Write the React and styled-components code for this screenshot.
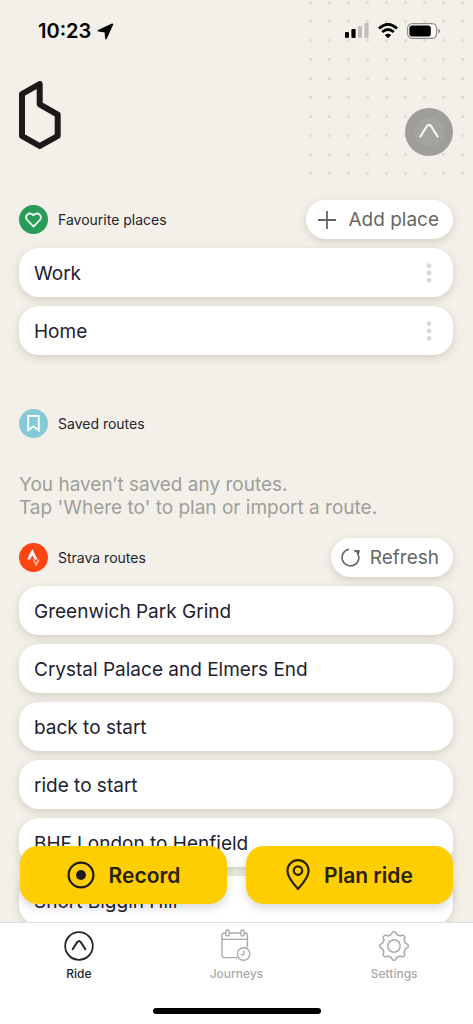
import { useState } from "react";
import styled, { createGlobalStyle, css } from "styled-components";

const places = ["Work", "Home"];
const stravaRoutes = [
    "Greenwich Park Grind",
    "Crystal Palace and Elmers End",
    "back to start",
    "ride to start",
    "BHF London to Henfield",
    "Short Biggin Hill",
];

// outline of the eight-toothed settings cog
function cogPath() {
    const at = (r, deg) => {
        const a = (deg * Math.PI) / 180;
        return `${(15 + r * Math.sin(a)).toFixed(2)} ${(15 - r * Math.cos(a)).toFixed(2)}`;
    };
    let d = `M${at(14, -6)}`;
    for (let t = 0; t < 360; t += 45) {
        d += `Q${at(14.6, t)} ${at(14, t + 6)}`;
        d += `L${at(12.6, t + 11)}`;
        d += `Q${at(11, t + 15)} ${at(11.8, t + 22.5)}`;
        d += `Q${at(11, t + 30)} ${at(12.6, t + 34)}`;
        d += `L${at(14, t + 39)}`;
    }
    return d + "Z";
}

function StatusBar() {
    return (
        <Status>
            <Clock>
                10:23
                <svg width="17" height="17" viewBox="0 0 17 17">
                    <path d="M1.4 7.8 15.4 1.3 9 15.4 8.3 8.8Z" stroke="#000" strokeWidth="1.6" strokeLinejoin="round" />
                </svg>
            </Clock>
            <Indicators>
                <svg width="24" height="16" viewBox="0 0 24 16">
                    <rect x="0" y="9" width="4" height="6" rx="1.3" />
                    <rect x="6.4" y="6" width="4.2" height="9" rx="1.3" />
                    <rect x="13" y="3" width="4" height="12" rx="1.3" fill="#bfbdb9" />
                    <rect x="19.4" y="0" width="4.2" height="15" rx="1.3" fill="#bfbdb9" />
                </svg>
                <svg width="20" height="16" viewBox="0 0 20 16">
                    <path d="M1 5.4Q10-2.6 19 5.4M4.2 9Q10 4 15.8 9" fill="none" stroke="#000" strokeWidth="2.7" />
                    <path d="M6.8 12Q10 9.4 13.2 12L10 15.2Z" />
                </svg>
                <svg width="34" height="16" viewBox="0 0 34 16">
                    <rect x=".6" y=".6" width="29" height="14.8" rx="4.6" fill="#fbfaf7" stroke="#8f8d89" strokeWidth="1.2" />
                    <rect x="2.4" y="2.4" width="21.4" height="11.2" rx="2.8" />
                    <path d="M31.2 5.8Q33.2 6.6 33.2 8T31.2 10.4Z" fill="#8f8d89" />
                </svg>
            </Indicators>
        </Status>
    );
}

function Logo() {
    return (
        <svg width="42" height="68" viewBox="0 0 42 68" role="img" aria-label="Beeline">
            <path d="M3 13 20.7 3V23.3L38.7 33.7V55L20.7 65 3 55Z" fill="none" stroke="#1b1919" strokeWidth="6" strokeLinejoin="round" />
        </svg>
    );
}

export default function App() {
    const [tab, setTab] = useState("Ride");

    return (
        <Screen>
            <GlobalStyle />
            <Content>
                <StatusBar />
                <Header>
                    <Logo />
                    <DeviceButton type="button" aria-label="Device">
                        <svg width="32" height="32" viewBox="0 0 32 32" fill="none">
                            <circle cx="16" cy="16" r="15" fill="#a4a3a0" />
                            <path d="M7.5 20.5 13.7 10.4Q16 7.2 18.3 10.4L24.5 20.5" stroke="#f6f5f2" strokeWidth="2.2" strokeLinecap="round" />
                        </svg>
                    </DeviceButton>
                </Header>

                <Section>
                    <SectionHead>
                        <Badge $color="#279b57">
                            <svg width="17" height="16" viewBox="0 0 17 16" fill="none">
                                <path d="M8.5 14.6 2.2 8C-.8 4.2 3.6-1 8.5 3.2 13.4-1 17.8 4.2 14.8 8Z" stroke="#eefaf2" strokeWidth="1.8" strokeLinejoin="round" />
                            </svg>
                        </Badge>
                        <SectionTitle>Favourite places</SectionTitle>
                        <PillButton type="button" $wide>
                            <svg width="18" height="18" viewBox="0 0 18 18">
                                <path d="M9 0V18M0 9H18" stroke="#666" strokeWidth="1.8" />
                            </svg>
                            Add place
                        </PillButton>
                    </SectionHead>
                    <List>
                        {places.map((place) => (
                            <Card key={place}>
                                <CardButton type="button">{place}</CardButton>
                                <MoreButton type="button" aria-label={`Options for ${place}`}>
                                    <svg width="6" height="20" viewBox="0 0 6 20" fill="#d9d9d9">
                                        <circle cx="3" cy="2.7" r="2.4" />
                                        <circle cx="3" cy="10" r="2.4" />
                                        <circle cx="3" cy="17.3" r="2.4" />
                                    </svg>
                                </MoreButton>
                            </Card>
                        ))}
                    </List>
                </Section>

                <Section>
                    <SectionHead>
                        <Badge $color="#84cbd7">
                            <svg width="13" height="17" viewBox="0 0 13 17" fill="none">
                                <path d="M1.2 1H11.8V15.4L6.5 11.4 1.2 15.4Z" stroke="#fff" strokeWidth="1.8" />
                            </svg>
                        </Badge>
                        <SectionTitle>Saved routes</SectionTitle>
                    </SectionHead>
                    <Empty>
                        You haven’t saved any routes.
                        <br />
                        Tap 'Where to' to plan or import a route.
                    </Empty>
                </Section>

                <Section>
                    <SectionHead>
                        <Badge $color="#fc4513">
                            <svg width="14" height="18" viewBox="0 0 14 18">
                                <path d="M0 10.4 5.3 0 10.6 10.4H7.5L5.3 6.2 3.1 10.4Z" fill="#fff" />
                                <path d="M5.4 10.4H7.5L9.1 13.4 10.6 10.4H13L9.1 17.8Z" fill="#fda68c" />
                            </svg>
                        </Badge>
                        <SectionTitle>Strava routes</SectionTitle>
                        <PillButton type="button">
                            <svg width="20" height="19" viewBox="0 0 20 19" fill="none" stroke="#666" strokeWidth="1.6">
                                <path d="M8 1.2A8.4 8.4 0 1 0 16 4.2" />
                                <path d="M13 2.6H18.4L17.2 7.6L16 4.2Z" fill="#666" strokeWidth="1" />
                            </svg>
                            Refresh
                        </PillButton>
                    </SectionHead>
                    <List>
                        {stravaRoutes.map((route) => (
                            <Card key={route}>
                                <CardButton type="button">{route}</CardButton>
                            </Card>
                        ))}
                    </List>
                </Section>
            </Content>

            <Footer>
                <Actions>
                    <ActionButton type="button">
                        <svg width="28" height="28" viewBox="0 0 28 28">
                            <circle cx="14" cy="14" r="12.4" fill="none" stroke="#1f1b12" strokeWidth="2.2" />
                            <circle cx="14" cy="14" r="5" fill="#1f1b22" />
                        </svg>
                        Record
                    </ActionButton>
                    <ActionButton type="button">
                        <svg width="24" height="32" viewBox="0 0 24 32" fill="none" stroke="#2a2305" strokeWidth="2.2">
                            <path d="M12 30Q1.4 18.4 1.4 11.8A10.6 10.6 0 0 1 22.6 11.8Q22.6 18.4 12 30Z" strokeLinejoin="round" />
                            <circle cx="12" cy="11.6" r="4.2" />
                        </svg>
                        Plan ride
                    </ActionButton>
                </Actions>
                <Tabs>
                    <Tab type="button" $active={tab === "Ride"} onClick={() => setTab("Ride")}>
                        <svg width="30" height="30" viewBox="0 0 30 30" strokeWidth="1.8">
                            <circle cx="15" cy="15" r="13.8" />
                            <path d="M8.6 18.2 13.2 11.2Q15 8.8 16.8 11.2L21.4 18.2" strokeWidth="2" strokeLinecap="round" />
                        </svg>
                        Ride
                    </Tab>
                    <Tab type="button" $active={tab === "Journeys"} onClick={() => setTab("Journeys")}>
                        <svg width="30" height="32" viewBox="0 0 30 32" strokeWidth="1.4">
                            <path d="M4.8 4H3.6Q1 4 1 6.6V26Q1 28.6 3.6 28.6H16.4M8.2 4H19.8M23.2 4H23.8Q26.4 4 26.4 6.6V18.6M1 10.4H26.4" />
                            <rect x="4.9" y="1" width="3.2" height="6" rx="1.4" />
                            <rect x="19.9" y="1" width="3.2" height="6" rx="1.4" />
                            <circle cx="22.6" cy="25" r="6.2" />
                            <path d="M22.8 21.6V25.6H19.8" />
                        </svg>
                        Journeys
                    </Tab>
                    <Tab type="button" $active={tab === "Settings"} onClick={() => setTab("Settings")}>
                        <svg width="30" height="30" viewBox="0 0 30 30" strokeWidth="1.5">
                            <path d={cogPath()} strokeLinejoin="round" />
                            <circle cx="15" cy="15" r="6.2" />
                        </svg>
                        Settings
                    </Tab>
                </Tabs>
                <HomeIndicator />
            </Footer>
        </Screen>
    );
}

const GlobalStyle = createGlobalStyle`
    *{
        box-sizing: border-box;
    }
    body{
        margin: 0;
        background: #f3f0e9;
        font-family: Inter, "Liberation Sans", sans-serif;
    }
    button{
        font-family: inherit;
        border: 0;
        padding: 0;
        background: none;
        cursor: pointer;
    }
    svg{
        display: block;
        flex-shrink: 0;
    }
`
const shadow = css`
    box-shadow: 0 3px 8px rgba(60, 60, 40, 0.18);
`
const Screen = styled.div`
    display: flex;
    flex-direction: column;
    height: 100vh;
    background: #f3f0e9;
`
const Content = styled.main`
    position: relative;
    flex: 1;
    min-height: 0;
    overflow-y: auto;
    scrollbar-width: none;
    padding: 0 20px 80px 19px;

    /* dotted texture in the corner */
    &::before{
        content: "";
        position: absolute;
        top: 0;
        right: 0;
        width: 172px;
        height: 182px;
        background: radial-gradient(circle, #dddad4 1px, transparent 2px) 0 -7px / 19px 19px;
    }
`
const Status = styled.div`
    position: relative;
    display: flex;
    justify-content: space-between;
    align-items: center;
    height: 62px;
    padding: 0 12px 0 19px;
`
const Clock = styled.div`
    display: flex;
    align-items: center;
    gap: 6px;
    font-size: 20px;
    font-weight: 600;
    color: #000;
`
const Indicators = styled.div`
    display: flex;
    align-items: center;
    gap: 9px;
`
const Header = styled.header`
    position: relative;
    display: flex;
    justify-content: space-between;
    align-items: flex-start;
    padding-top: 19px;
    margin-bottom: 44px;
`
const DeviceButton = styled.button`
    display: flex;
    align-items: center;
    justify-content: center;
    width: 48px;
    height: 48px;
    margin-top: 27px;
    border-radius: 50%;
    background: #9e9d9a;
`
const Section = styled.section`
    & + &{
        margin-top: 49px;
    }
    & + & + &{
        margin-top: 19px;
    }
`
const SectionHead = styled.div`
    display: flex;
    align-items: center;
    gap: 10px;
    height: 39px;
`
const Badge = styled.span`
    display: flex;
    align-items: center;
    justify-content: center;
    width: 29px;
    height: 29px;
    border-radius: 50%;
    background: ${(props) => props.$color};
`
const SectionTitle = styled.h2`
    flex: 1;
    margin: 0;
    font-size: 14px;
    font-weight: 400;
    color: #23252e;
`
const PillButton = styled.button`
    display: flex;
    align-items: center;
    gap: ${(props) => (props.$wide ? 12 : 9)}px;
    height: 39px;
    padding: 0 14px 0 ${(props) => (props.$wide ? 12 : 10)}px;
    border-radius: 20px;
    background: #fff;
    color: #666;
    font-size: 19px;
    ${shadow}
`
const List = styled.ul`
    display: flex;
    flex-direction: column;
    gap: 9px;
    margin: 9px 0 0;
    padding: 0;
    list-style: none;
`
const Card = styled.li`
    display: flex;
    height: 49px;
    border-radius: 20px;
    background: #fff;
    ${shadow}
`
const CardButton = styled.button`
    flex: 1;
    padding: 2px 15px 0;
    text-align: left;
    font-size: 19px;
    color: #1e2130;
`
const MoreButton = styled.button`
    display: flex;
    align-items: center;
    justify-content: center;
    width: 48px;
`
const Empty = styled.p`
    margin: 30px 0 0;
    font-size: 19px;
    line-height: 23px;
    color: #a09e9a;
`
const Footer = styled.footer`
    position: relative;
    border-top: 1px solid #dedede;
    background: #fff;
`
const Actions = styled.div`
    position: absolute;
    left: 0;
    right: 0;
    bottom: 100%;
    display: grid;
    grid-template-columns: 1fr 1fr;
    gap: 19px;
    padding: 0 20px 19px;
`
const ActionButton = styled.button`
    display: flex;
    align-items: center;
    justify-content: center;
    gap: 14px;
    height: 58px;
    border-radius: 18px;
    background: #ffce00;
    color: #272107;
    font-size: 21px;
    font-weight: 600;
    box-shadow: 0 4px 10px rgba(0, 0, 0, 0.15);
`
const Tabs = styled.nav`
    display: grid;
    grid-template-columns: repeat(3, 1fr);
    height: 85px;
`
const Tab = styled.button`
    display: flex;
    flex-direction: column;
    align-items: center;
    justify-content: flex-end;
    gap: 5px;
    padding-bottom: 26px;
    font-size: 12px;
    font-weight: 500;
    line-height: 16px;
    color: ${(props) => (props.$active ? "#26262a" : "#a9a9a9")};

    svg{
        fill: none;
        stroke: currentColor;
    }
`
const HomeIndicator = styled.div`
    width: 168px;
    height: 6px;
    margin: 0 auto 10px;
    border-radius: 3px;
    background: #000;
`
